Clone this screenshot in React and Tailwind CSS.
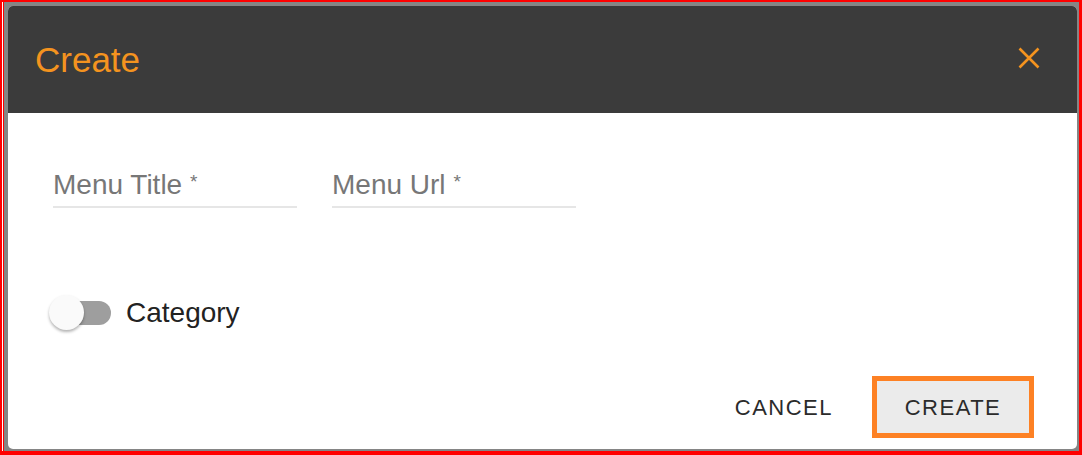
import React, { useState } from 'react';

const font = { fontFamily: '"Liberation Sans", Arial, sans-serif' };

const TextField = ({ label }) => (
  <div className="w-[244px] flex flex-col">
    <div className="h-[32px] text-[28px] leading-[32px] text-[#777777] whitespace-nowrap">
      {label} <span className="text-[19px] leading-[0] align-[6px]">*</span>
    </div>
    <div className="mt-[5px] h-[2px] bg-[#e6e6e6]" />
  </div>
);

const Toggle = ({ on, onChange }) => (
  <button onClick={() => onChange(!on)} className="relative w-[62px] h-[35px] shrink-0">
    <span className="absolute left-[3px] top-[6px] w-[59px] h-[24px] rounded-full bg-[#9e9e9e]" />
    <span className="absolute left-0 top-0 w-[35px] h-[35px] rounded-full bg-[#fafafa] shadow-[0_2px_3px_rgba(0,0,0,0.3)]" />
  </button>
);

export default function App() {
  const [category, setCategory] = useState(false);

  return (
    <div style={font} className="w-[1082px] h-[455px] bg-[#ff0000] pt-[2px] pl-[2px] pr-[3px] pb-[4px] flex">
      <div className="flex-1 flex border-l border-white">
        <div className="flex-1 flex border-l border-[#ff0000] bg-[#858585] pt-[4px] pl-[4px] pr-[2px] pb-[2px]">
          {/* Dialog */}
          <div className="flex-1 flex flex-col rounded-[5px] overflow-hidden bg-white">
            {/* Header */}
            <div className="h-[107px] shrink-0 bg-[#3b3b3b] flex items-center justify-between pl-[27px] pr-[37px]">
              <h2 className="text-[35px] leading-none text-[#f4931f]">Create</h2>
              <button className="-translate-y-[2px] text-[#f4931f]">
                <svg width="22" height="22" viewBox="0 0 22 22" fill="none" stroke="currentColor" strokeWidth="2.6">
                  <path d="M1.5 1.5 L20.5 20.5 M20.5 1.5 L1.5 20.5" />
                </svg>
              </button>
            </div>

            {/* Body */}
            <div className="flex-1 flex flex-col pt-[56px] pb-[11px] pl-[45px] pr-[43px]">
              <div className="flex gap-[35px]">
                <TextField label="Menu Title" />
                <TextField label="Menu Url" />
              </div>

              <div className="mt-[87px] -ml-[4px] flex items-center gap-[15px]">
                <Toggle on={category} onChange={setCategory} />
                <span className="text-[28px] leading-[32px] text-[#222222]">Category</span>
              </div>

              <div className="mt-auto flex justify-end items-center gap-[25px]">
                <button className="h-[62px] px-[14px] text-[22px] tracking-[1.5px] text-[#2b2b2b]">CANCEL</button>
                <button className="w-[162px] h-[62px] border-[5px] border-[#fd8124] bg-[#ebebeb] text-[22px] tracking-[1.5px] text-[#2b2b2b]">
                  CREATE
                </button>
              </div>
            </div>
          </div>
        </div>
      </div>
    </div>
  );
}
